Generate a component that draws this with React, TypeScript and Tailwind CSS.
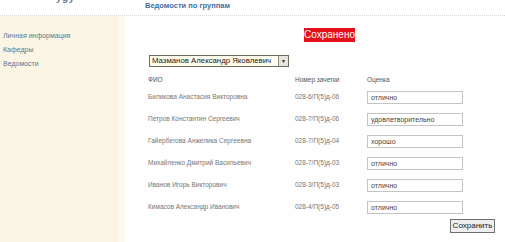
const font = { fontFamily: '"Liberation Sans", Arial, sans-serif' };

const students = [
  { name: 'Биликова Анастасия Викторовна', num: '028-6/П(5)д-06', grade: 'отлично' },
  { name: 'Петров Константин Сергеевич', num: '028-7/П(5)д-06', grade: 'удовлетворительно' },
  { name: 'Гайербегова Анжелика Сергеевна', num: '028-7/П(5)д-04', grade: 'хорошо' },
  { name: 'Михайленко Дмитрий Васильевич', num: '028-7/П(5)д-03', grade: 'отлично' },
  { name: 'Иванов Игорь Викторович', num: '028-3/П(5)д-03', grade: 'отлично' },
  { name: 'Кимасов Александр Иванович', num: '028-4/П(5)д-05', grade: 'отлично' },
];

export default function App() {
  return (
    <div className="w-[505px] h-[242px] overflow-hidden bg-white flex flex-col" style={font}>
      {/* Header */}
      <div className="h-[16px] flex items-start border-b border-dotted border-[#d8d8d8] relative">
        <div className="w-[145px] relative h-full overflow-hidden">
          {/* logo, cut off at the top of the page */}
          <span className="absolute left-[56px] top-[-10px] text-[10px] font-bold text-[#6a7d99] tracking-wider">ygy</span>
        </div>
        <div className="pt-[1px] text-[7.5px] font-bold text-[#3f6f9f] leading-[10px]">Ведомости по группам</div>
      </div>

      <div className="flex flex-1">
        {/* Sidebar */}
        <div className="w-[125px] flex bg-[#fbf5e6]">
          <div className="flex-1 flex flex-col gap-[5px] pt-[15px] pl-[3px] text-[7px] text-[#61758c] leading-[9px]">
            <span>Личная информация</span>
            <span>Кафедры</span>
            <span>Ведомости</span>
          </div>
          <div className="w-[6px] bg-[#fdf9ee]" />
        </div>

        {/* Main */}
        <div className="flex-1 flex flex-col pl-[23px] pr-[10px] bg-[#fefefe]">
          <div className="mt-[12px] ml-[156px] h-[14px] w-[51px] bg-[#e5101a] text-white text-[10px] leading-[14px] text-center whitespace-nowrap">
            Сохранено
          </div>

          <div className="mt-[13px] ml-[1px] flex h-[12px] w-[140px] border border-[#6b6b5e] bg-[#fffbea]">
            <div className="flex-1 text-[7.8px] leading-[10px] pl-[2px] text-[#222] whitespace-nowrap">
              Мазманов Александр Яковлевич
            </div>
            <div className="w-[10px] border-l border-[#8a8a80] bg-[#e6e4dc] flex items-center justify-center">
              <span className="text-[5px] leading-none text-[#222]">▼</span>
            </div>
          </div>

          <div className="mt-[8px] h-[10px] grid grid-cols-[147px_72px_96px] items-center text-[6.5px] text-[#555]">
            <span>ФИО</span>
            <span>Номер зачетки</span>
            <span>Оценка</span>
          </div>

          <div className="mt-[1px] flex flex-col">
            {students.map((s) => (
              <div key={s.name} className="h-[22px] grid grid-cols-[147px_72px_96px] items-center text-[6.5px] text-[#777]">
                <span className="whitespace-nowrap">{s.name}</span>
                <span className="whitespace-nowrap">{s.num}</span>
                <div className="h-[13px] border border-[#c4c4c4] bg-white text-[7px] leading-[11px] pl-[3px] text-[#444]">
                  {s.grade}
                </div>
              </div>
            ))}
          </div>

          <div className="mt-[1px] flex justify-end">
            <div className="h-[14px] w-[45px] border border-[#6f6f6f] bg-[#eeeeee] text-[8px] leading-[12px] text-center text-[#222]">
              Сохранить
            </div>
          </div>
        </div>
      </div>
    </div>
  );
}
